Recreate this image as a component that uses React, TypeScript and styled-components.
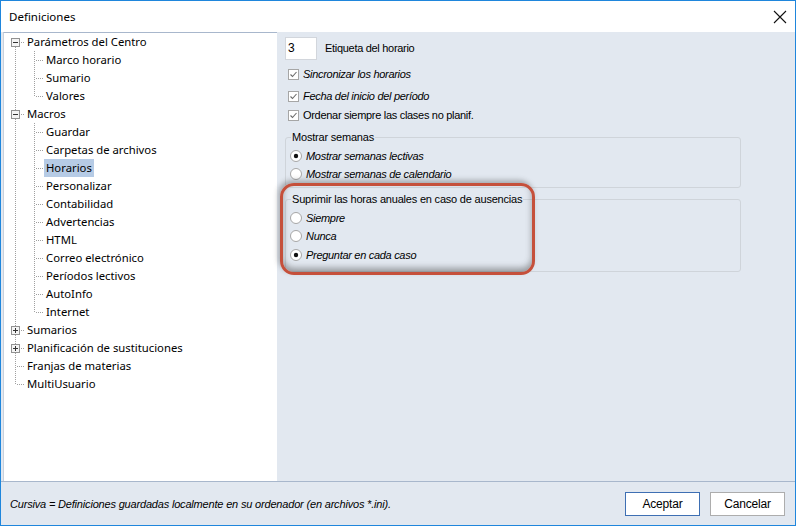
import styled, { createGlobalStyle } from "styled-components";

const GlobalStyle = createGlobalStyle`
  html, body {
    margin: 0;
    padding: 0;
    background: #ffffff;
  }
  * {
    box-sizing: border-box;
  }
`;

const Window = styled.div`
  width: 796px;
  height: 526px;
  border: 1px solid #1f86dc;
  background: #e2e8f0;
  display: flex;
  flex-direction: column;
  overflow: hidden;
  position: relative;
`;

const TitleBar = styled.div`
  height: 31px;
  flex: none;
  background: #ffffff;
  display: flex;
  align-items: center;
  justify-content: space-between;
  padding: 0 7px 0 8px;
  font-family: "Noto Sans", "Open Sans", sans-serif;
  font-size: 11.5px;
  color: #000000;
`;

const CloseButton = styled.div`
  width: 16px;
  height: 16px;
  display: flex;
  align-items: center;
  justify-content: center;
`;

const Main = styled.div`
  flex: 1;
  display: flex;
  min-height: 0;
  border-bottom: 1px solid #a8b7cc;
`;

const TreePanel = styled.div`
  width: 274px;
  margin-left: 2px;
  background: #ffffff;
  border-top: 1px solid #a8b7cc;
  border-left: 1px solid #c9d1dc;
  padding: 0 0 0 2px;
  font-family: "Noto Sans", "Open Sans", sans-serif;
  font-size: 11.3px;
  color: #000000;
`;

const TreeRow = styled.div`
  height: 18px;
  display: flex;
  align-items: center;
`;

const TreeLabel = styled.span<{ $selected?: boolean }>`
  height: 18px;
  line-height: 18px;
  padding: 0 2px;
  white-space: nowrap;
  background: ${(p) => (p.$selected ? "#b6cbe5" : "transparent")};
`;

const Settings = styled.div`
  flex: 1;
  padding: 4px 0 0 8px;
  font-family: "Liberation Sans", Arial, sans-serif;
  font-size: 11px;
  letter-spacing: -0.3px;
  color: #000000;
  position: relative;
`;

const FieldRow = styled.div`
  display: flex;
  align-items: center;
  gap: 8px;
  height: 24px;
`;

const NumberBox = styled.div`
  width: 32px;
  height: 23px;
  background: #ffffff;
  border: 1px solid #d2d6dc;
  padding: 3px 0 0 2px;
  font-size: 12px;
`;

const CheckRow = styled.div<{ $gap: number }>`
  display: flex;
  align-items: center;
  gap: 4px;
  height: 18px;
  margin-top: ${(p) => p.$gap}px;
  padding-left: 3px;
`;

const OptionText = styled.span<{ $italic?: boolean }>`
  font-style: ${(p) => (p.$italic ? "italic" : "normal")};
  white-space: nowrap;
`;

const Group = styled.fieldset<{ $height: number; $top: number }>`
  margin: ${(p) => p.$top}px 0 0 0;
  width: 456px;
  height: ${(p) => p.$height}px;
  border: 1px solid #cfd4da;
  border-radius: 3px;
  padding: 0 0 0 4px;
  min-width: 0;
`;

const Legend = styled.legend`
  padding: 0 1px;
  margin-left: 1px;
  font-size: 11px;
  letter-spacing: -0.2px;
`;

const RadioRow = styled.div<{ $gap: number }>`
  display: flex;
  align-items: center;
  gap: 4px;
  height: 18px;
  margin-top: ${(p) => p.$gap}px;
`;

const Highlight = styled.div`
  position: absolute;
  left: 3px;
  top: 151px;
  width: 255px;
  height: 92px;
  border: 3px solid #c5503b;
  border-radius: 14px;
  box-shadow: inset 0 -4px 6px rgba(60, 60, 60, 0.45),
    -2px -3px 5px rgba(60, 60, 60, 0.35);
  pointer-events: none;
`;

const Footer = styled.div`
  height: 43px;
  flex: none;
  display: flex;
  align-items: center;
  justify-content: space-between;
  padding: 0 10px 0 9px;
  font-family: "Liberation Sans", Arial, sans-serif;
  font-size: 11px;
`;

const Note = styled.span`
  font-style: italic;
  letter-spacing: -0.18px;
  color: #000000;
`;

const Buttons = styled.div`
  display: flex;
  gap: 10px;
  margin-top: 1px;
`;

const Button = styled.button<{ $default?: boolean }>`
  width: 75px;
  height: 24px;
  background: #ffffff;
  border: 1px solid ${(p) => (p.$default ? "#3e6fb3" : "#adadad")};
  font-family: "Liberation Sans", Arial, sans-serif;
  font-size: 12px;
  letter-spacing: -0.2px;
  color: #000000;
  padding: 0;
`;

type Guide = "line" | "tee" | "corner" | "first" | "blank";

const Connector = ({ kind, box }: { kind: Guide; box?: "plus" | "minus" }) => {
  const dot = { stroke: "#a0a0a0", strokeWidth: 1, strokeDasharray: "1 1" };
  return (
    <svg width="19" height="18" viewBox="0 0 19 18" style={{ flex: "none" }}>
      {kind === "line" && <line x1="9.5" y1="0" x2="9.5" y2="18" {...dot} />}
      {kind === "tee" && <line x1="9.5" y1="0" x2="9.5" y2="18" {...dot} />}
      {kind === "corner" && <line x1="9.5" y1="0" x2="9.5" y2="10" {...dot} />}
      {kind === "first" && <line x1="9.5" y1="10" x2="9.5" y2="18" {...dot} />}
      {kind !== "line" && kind !== "blank" && (
        <line x1="11" y1="9.5" x2="19" y2="9.5" {...dot} />
      )}
      {box && (
        <g>
          <rect x="5.5" y="5.5" width="8" height="8" fill="#f4f4f4" stroke="#919191" />
          <line x1="7" y1="9.5" x2="12" y2="9.5" stroke="#333333" />
          {box === "plus" && <line x1="9.5" y1="7" x2="9.5" y2="12" stroke="#333333" />}
        </g>
      )}
    </svg>
  );
};

type Node = { label: string; guides: Guide[]; box?: "plus" | "minus"; selected?: boolean };

const tree: Node[] = [
  { label: "Parámetros del Centro", guides: ["first"], box: "minus" },
  { label: "Marco horario", guides: ["line", "tee"] },
  { label: "Sumario", guides: ["line", "tee"] },
  { label: "Valores", guides: ["line", "corner"] },
  { label: "Macros", guides: ["tee"], box: "minus" },
  { label: "Guardar", guides: ["line", "tee"] },
  { label: "Carpetas de archivos", guides: ["line", "tee"] },
  { label: "Horarios", guides: ["line", "tee"], selected: true },
  { label: "Personalizar", guides: ["line", "tee"] },
  { label: "Contabilidad", guides: ["line", "tee"] },
  { label: "Advertencias", guides: ["line", "tee"] },
  { label: "HTML", guides: ["line", "tee"] },
  { label: "Correo electrónico", guides: ["line", "tee"] },
  { label: "Períodos lectivos", guides: ["line", "tee"] },
  { label: "AutoInfo", guides: ["line", "tee"] },
  { label: "Internet", guides: ["line", "corner"] },
  { label: "Sumarios", guides: ["tee"], box: "plus" },
  { label: "Planificación de sustituciones", guides: ["tee"], box: "plus" },
  { label: "Franjas de materias", guides: ["tee"] },
  { label: "MultiUsuario", guides: ["corner"] },
];

const CheckBox = () => (
  <svg width="11" height="11" viewBox="0 0 11 11">
    <rect x="0.5" y="0.5" width="10" height="10" fill="#ffffff" stroke="#a6a6a6" />
    <path d="M2.5 5.5 L4.5 7.5 L8.5 3" fill="none" stroke="#6b6b6b" strokeWidth="1.1" />
  </svg>
);

const Radio = ({ checked }: { checked?: boolean }) => (
  <svg width="12" height="12" viewBox="0 0 12 12">
    <circle cx="6" cy="6" r="5.5" fill="#ffffff" stroke="#a6a6a6" />
    {checked && <circle cx="6" cy="6" r="2.2" fill="#111111" />}
  </svg>
);

export default function App() {
  return (
    <>
      <GlobalStyle />
      <Window>
        <TitleBar>
          <span>Definiciones</span>
          <CloseButton>
            <svg width="14" height="14" viewBox="0 0 14 14">
              <path d="M1 1 L13 13 M13 1 L1 13" stroke="#111111" strokeWidth="1.1" />
            </svg>
          </CloseButton>
        </TitleBar>
        <Main>
          <TreePanel>
            {tree.map((n) => (
              <TreeRow key={n.label}>
                {n.guides.map((g, i) => (
                  <Connector
                    key={i}
                    kind={g}
                    box={i === n.guides.length - 1 ? n.box : undefined}
                  />
                ))}
                <TreeLabel $selected={n.selected}>{n.label}</TreeLabel>
              </TreeRow>
            ))}
          </TreePanel>
          <Settings>
            <FieldRow>
              <NumberBox>3</NumberBox>
              <span>Etiqueta del horario</span>
            </FieldRow>
            <CheckRow $gap={5}>
              <CheckBox />
              <OptionText $italic>Sincronizar los horarios</OptionText>
            </CheckRow>
            <CheckRow $gap={4}>
              <CheckBox />
              <OptionText $italic>Fecha del inicio del período</OptionText>
            </CheckRow>
            <CheckRow $gap={1}>
              <CheckBox />
              <OptionText>Ordenar siempre las clases no planif.</OptionText>
            </CheckRow>
            <Group $top={7} $height={57}>
              <Legend>Mostrar semanas</Legend>
              <RadioRow $gap={4}>
                <Radio checked />
                <OptionText $italic>Mostrar semanas lectivas</OptionText>
              </RadioRow>
              <RadioRow $gap={0}>
                <Radio />
                <OptionText $italic>Mostrar semanas de calendario</OptionText>
              </RadioRow>
            </Group>
            <Group $top={5} $height={79}>
              <Legend>Suprimir las horas anuales en caso de ausencias</Legend>
              <RadioRow $gap={4}>
                <Radio />
                <OptionText $italic>Siempre</OptionText>
              </RadioRow>
              <RadioRow $gap={0}>
                <Radio />
                <OptionText $italic>Nunca</OptionText>
              </RadioRow>
              <RadioRow $gap={1}>
                <Radio checked />
                <OptionText $italic>Preguntar en cada caso</OptionText>
              </RadioRow>
            </Group>
            <Highlight />
          </Settings>
        </Main>
        <Footer>
          <Note>Cursiva = Definiciones guardadas localmente en su ordenador (en archivos *.ini).</Note>
          <Buttons>
            <Button $default>Aceptar</Button>
            <Button>Cancelar</Button>
          </Buttons>
        </Footer>
      </Window>
    </>
  );
}
